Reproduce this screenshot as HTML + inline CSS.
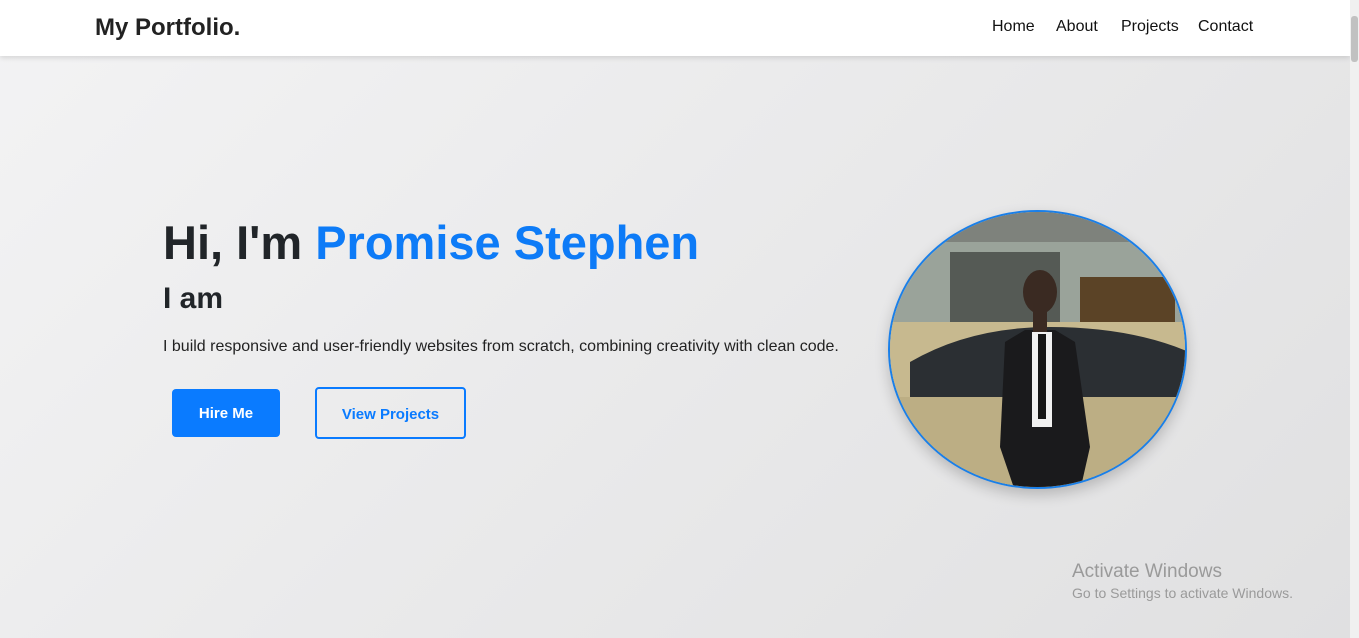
<!DOCTYPE html>
<html><head><style>
*{margin:0;padding:0;box-sizing:border-box}
body{width:1359px;height:638px;overflow:hidden;font-family:"Liberation Sans",sans-serif;background:linear-gradient(135deg,#f3f3f4,#e0e0e1);position:relative;color:#212529}
.nav{position:absolute;left:0;top:0;width:1350px;height:56px;background:#fff;box-shadow:0 2px 5px rgba(0,0,0,.12)}
.logo{position:absolute;left:95px;top:14px;font-size:24px;font-weight:bold;color:#222}
.links{position:absolute;top:18px;font-size:16px;color:#111}
.sb{position:absolute;right:0;top:0;width:9px;height:638px;background:#f0f0f0}
.sb div{position:absolute;left:1px;top:16px;width:7px;height:46px;background:#c1c1c1;border-radius:3px}
h1{position:absolute;left:163px;top:215px;font-size:47px;font-weight:bold;white-space:nowrap}
h1 span{color:#0d7bf7}
h2{position:absolute;left:163px;top:282px;font-size:30px;font-weight:bold}
p{position:absolute;left:163px;top:338px;font-size:16px;color:#222}
.b1{position:absolute;left:172px;top:389px;width:108px;height:48px;background:#0a7bff;color:#fff;border-radius:4px;font-weight:bold;font-size:15px;text-align:center;line-height:50px}
.b2{position:absolute;left:315px;top:387px;width:151px;height:52px;border:2px solid #0a7bff;color:#0a7bff;border-radius:4px;font-weight:bold;font-size:15px;text-align:center;line-height:52px}
.pic{position:absolute;left:888px;top:210px;width:299px;height:279px;border-radius:50%;border:2px solid #1a7fe8;overflow:hidden;box-shadow:0 6px 14px rgba(0,0,0,.2)}
.wm{position:absolute;left:1072px;color:#9a9a9a}
</style></head><body>
<div class="nav"><div class="logo">My Portfolio.</div>
<div class="links" style="left:992px">Home</div><div class="links" style="left:1056px">About</div><div class="links" style="left:1121px">Projects</div><div class="links" style="left:1198px">Contact</div></div>
<div class="sb"><div></div></div>
<h1>Hi, I'm <span>Promise Stephen</span></h1>
<h2>I am</h2>
<p>I build responsive and user-friendly websites from scratch, combining creativity with clean code.</p>
<div class="b1">Hire Me</div><div class="b2">View Projects</div>
<div class="pic"><svg width="299" height="279" viewBox="0 0 299 279">
<rect width="299" height="279" fill="#9aa39a"/>
<rect y="0" width="299" height="30" fill="#7e827c"/>
<rect x="60" y="40" width="110" height="70" fill="#555a55"/>
<rect x="190" y="65" width="95" height="45" fill="#5b4326"/>
<rect x="0" y="110" width="299" height="170" fill="#c7b98f"/>
<path d="M20 150 Q80 115 160 115 Q240 115 299 140 L299 185 L20 185Z" fill="#2b2f33"/>
<rect x="0" y="185" width="299" height="94" fill="#bcae84"/>
<path d="M115 130 L135 118 L165 118 L185 130 L200 235 L190 279 L125 279 L110 235Z" fill="#1a1a1c"/>
<rect x="142" y="120" width="20" height="95" fill="#f0f0f0"/>
<rect x="148" y="122" width="8" height="85" fill="#151515"/>
<ellipse cx="150" cy="80" rx="17" ry="22" fill="#3a2a22"/>
<rect x="143" y="98" width="14" height="22" fill="#3a2a22"/>
</svg></div>
<div class="wm" style="top:561px;font-size:19px">Activate Windows</div>
<div class="wm" style="top:585px;font-size:14px">Go to Settings to activate Windows.</div>
</body></html>
